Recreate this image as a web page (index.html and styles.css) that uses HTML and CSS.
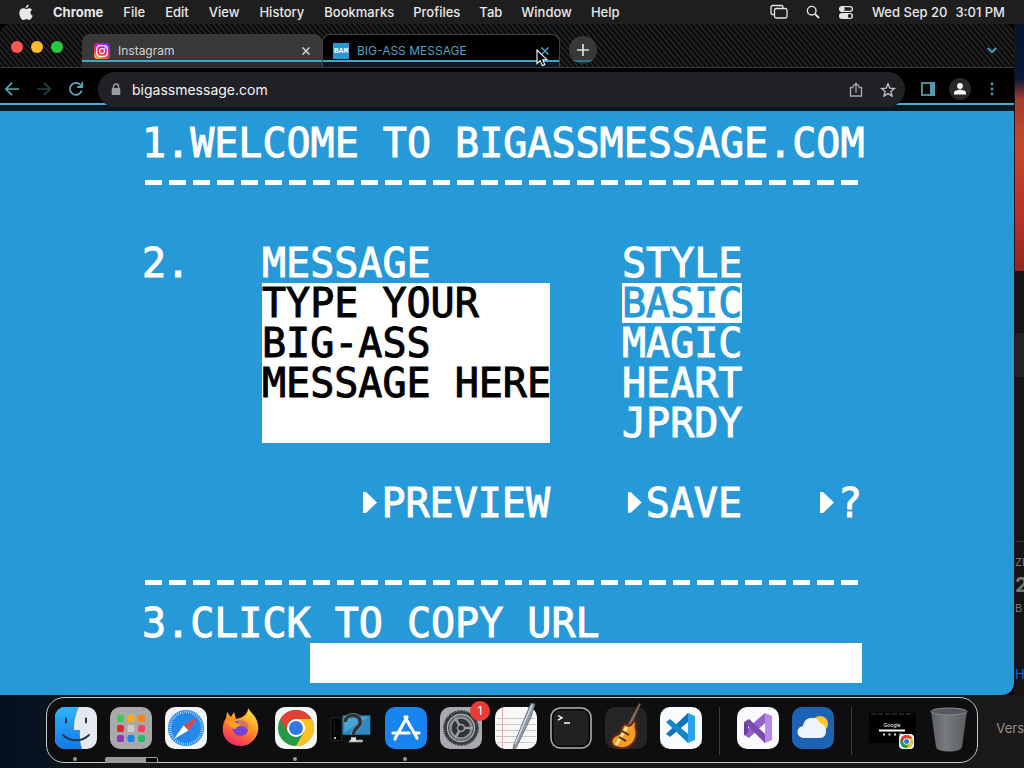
FILE: index.html
```html
<!DOCTYPE html>
<html lang="en">
<head>
<meta charset="utf-8">
<title>BIG-ASS MESSAGE</title>
<link rel="stylesheet" href="styles.css">
</head>
<body>
<header class="menubar">
  <nav class="menus" aria-label="Menu bar">
    <button class="menu apple" aria-label="Apple"><svg width="14" height="17" viewBox="0 0 14 17" fill="#e8e8e8"><path d="M9.7.4c.1 1.9-1.300 3.500-3 3.600C6.500 2.200 8 .6 9.700.4zM7.200 5c.8 0 1.600-.8 3-.8 1.300 0 2.300.7 2.900 1.600-2.500 1.600-2.100 4.900.6 6-.7 1.900-2 4.200-3.500 4.200-1.100 0-1.500-.7-2.800-.7s-1.800.7-2.800.7C2.500 16 .3 12.300.3 9.200c0-3.200 2-4.900 3.900-4.900C5.500 4.300 6.400 5 7.200 5z"/></svg></button>
    <button class="menu app">Chrome</button>
    <button class="menu">File</button>
    <button class="menu">Edit</button>
    <button class="menu">View</button>
    <button class="menu">History</button>
    <button class="menu">Bookmarks</button>
    <button class="menu">Profiles</button>
    <button class="menu">Tab</button>
    <button class="menu">Window</button>
    <button class="menu">Help</button>
  </nav>
  <div class="status">
    <button class="menu" aria-label="Windows"><svg width="18" height="16" viewBox="0 0 18 16" fill="none" stroke="#e4e4e4" stroke-width="1.300"><path d="M4 10.500H2.500A1.500 1.500 0 0 1 1 9V3a1.500 1.500 0 0 1 1.500-1.500h9A1.500 1.500 0 0 1 13 3v1"/><rect x="4.500" y="4.500" width="12.500" height="9.500" rx="1.800"/></svg></button>
    <button class="menu" aria-label="Search"><svg width="14" height="14" viewBox="0 0 14 14" fill="none" stroke="#e4e4e4" stroke-width="1.400"><circle cx="5.700" cy="5.700" r="4.300"/><path d="M9 9l4 4" stroke-width="1.800"/></svg></button>
    <button class="menu" aria-label="Control Center"><svg width="16" height="15" viewBox="0 0 16 15"><rect x="1.600" y="1.600" width="12.800" height="4.800" rx="2.400" fill="none" stroke="#e4e4e4" stroke-width="1.300"/><circle cx="4.300" cy="4" r="2.400" fill="#e4e4e4"/><rect x="1" y="8" width="14" height="6" rx="3" fill="#e4e4e4"/><circle cx="11.700" cy="11" r="1.900" fill="#1e1e1e"/></svg></button>
    <time class="clock"><span>Wed Sep 20</span><span>3:01 PM</span></time>
  </div>
</header>

<div class="workspace">
  <section class="window">
    <div class="tabstrip">
      <div class="lights">
        <button class="light red" aria-label="Close"></button>
        <button class="light yellow" aria-label="Minimize"></button>
        <button class="light green" aria-label="Zoom"></button>
      </div>
      <div class="tab">
        <svg width="16" height="16" viewBox="0 0 16 16"><defs><linearGradient id="ig" x1="0.200" y1="1" x2="0.700" y2="0"><stop offset="0" stop-color="#fdbf3a"/><stop offset=".35" stop-color="#f4373d"/><stop offset=".65" stop-color="#d020a0"/><stop offset="1" stop-color="#8a1fff"/></linearGradient></defs><rect width="16" height="16" rx="3.500" fill="url(#ig)"/><rect x="2.700" y="2.700" width="10.600" height="10.600" rx="3" fill="none" stroke="#fff" stroke-width="1.200"/><circle cx="8" cy="8" r="2.500" fill="none" stroke="#fff" stroke-width="1.200"/><circle cx="11" cy="5" r=".8" fill="#fff"/></svg>
        <a class="tab-title" href="#">Instagram</a>
        <button class="tab-close" aria-label="Close tab"><svg width="8" height="8" viewBox="0 0 8 8" stroke="currentColor" stroke-width="1.500"><path d="M.5.5l7 7M7.500.5l-7 7"/></svg></button>
      </div>
      <div class="tab active">
        <span class="favicon">BAM</span>
        <a class="tab-title" href="#">BIG-ASS MESSAGE</a>
        <button class="tab-close" aria-label="Close tab"><svg width="8" height="8" viewBox="0 0 8 8" stroke="currentColor" stroke-width="1.500"><path d="M.5.5l7 7M7.500.5l-7 7"/></svg></button>
        <svg class="pointer" width="12" height="18" viewBox="0 0 12 18"><path d="M1 1v13.500l3.200-2.900 2.100 5 2.500-1-2.100-4.900H11z" fill="#000" stroke="#fff" stroke-width="1.100"/></svg>
      </div>
      <button class="newtab" aria-label="New tab"><svg width="12" height="12" viewBox="0 0 12 12" stroke="#ddd" stroke-width="1.700"><path d="M6 0v12M0 6h12"/></svg></button>
      <button class="tabsearch" aria-label="Search tabs"><svg width="10" height="7" viewBox="0 0 10 7" fill="none" stroke="#4f9fae" stroke-width="1.800"><path d="M.8 1L5 5.200 9.200 1"/></svg></button>
    </div>
    <div class="toolbar">
      <div class="nav">
        <button class="tool" aria-label="Back"><svg width="16" height="16" viewBox="0 0 16 16" fill="none" stroke="#57a9b8" stroke-width="1.700"><path d="M15 8H2M8 1.800L1.800 8 8 14.200"/></svg></button>
        <button class="tool" aria-label="Forward"><svg width="16" height="16" viewBox="0 0 16 16" fill="none" stroke="#22434a" stroke-width="1.700"><path d="M1 8h13M8 1.800L14.200 8 8 14.200"/></svg></button>
        <button class="tool" aria-label="Reload"><svg width="16" height="16" viewBox="0 0 16 16" fill="none" stroke="#57a9b8" stroke-width="1.800"><path d="M13.700 9.500A6 6 0 1 1 12.500 4L14 5.500"/><path d="M14.200 1v5H9.200"/></svg></button>
      </div>
      <div class="omnibox">
        <svg width="10" height="13" viewBox="0 0 10 13"><path d="M2.500 6V3.500a2.500 2.500 0 0 1 5 0V6" fill="none" stroke="#9a9da1" stroke-width="1.400"/><rect x=".7" y="5" width="8.600" height="7" rx="1" fill="#9a9da1"/></svg>
        <input class="url" type="text" aria-label="Address" value="bigassmessage.com">
        <button class="tool" aria-label="Share"><svg width="14" height="16" viewBox="0 0 14 16" fill="none" stroke="#a9abad" stroke-width="1.300"><path d="M4.500 5.500h-3v8.500h11V5.500h-3M7 10.500V1.500M4 4.300l3-3 3 3"/></svg></button>
        <button class="tool" aria-label="Bookmark"><svg width="16" height="16" viewBox="0 0 16 16" fill="none" stroke="#b9bbbd" stroke-width="1.400"><path d="M8 1.800l1.800 4.300 4.600.4-3.500 3 1.100 4.500L8 11.600 4 14l1.100-4.500-3.500-3 4.600-.4z"/></svg></button>
      </div>
      <div class="actions">
        <button class="tool" aria-label="Side panel"><svg width="14" height="14" viewBox="0 0 14 14"><rect x="1" y="1" width="12" height="12" fill="none" stroke="#4f9dac" stroke-width="1.800"/><path d="M9 0h5v14H9z" fill="#4f9dac"/></svg></button>
        <button class="tool avatar" aria-label="Profile"><svg width="12" height="12" viewBox="0 0 12 12" fill="#fff"><circle cx="6" cy="3" r="2.900"/><path d="M0 11.500V10c0-2.200 3-3.300 6-3.300s6 1.100 6 3.300v1.500z"/></svg></button>
        <button class="tool" aria-label="More"><svg width="4" height="14" viewBox="0 0 4 14" fill="#4f9dac"><circle cx="2" cy="2" r="1.400"/><circle cx="2" cy="7" r="1.400"/><circle cx="2" cy="12" r="1.400"/></svg></button>
      </div>
    </div>

    <main class="page">
      <form class="sheet">
        <h1 class="line">1.WELCOME TO BIGASSMESSAGE.COM</h1>
        <hr class="dashes">
        <div class="composer">
          <span class="step">2.</span>
          <div class="message">
            <label class="line" for="msg">MESSAGE</label>
            <textarea class="field area" id="msg" rows="4" wrap="off">TYPE YOUR
BIG-ASS
MESSAGE HERE</textarea>
          </div>
          <div class="styles">
            <span class="line">STYLE</span>
            <button type="button" class="line option selected">BASIC</button>
            <button type="button" class="line option">MAGIC</button>
            <button type="button" class="line option">HEART</button>
            <button type="button" class="line option">JPRDY</button>
          </div>
          <button type="button" class="line command preview"><svg width="24" height="40" viewBox="0 0 24 40" fill="#fff"><path d="M6 9h3l11 10.500L9 30H6z"/></svg>PREVIEW</button>
          <button type="button" class="line command save"><svg width="24" height="40" viewBox="0 0 24 40" fill="#fff"><path d="M6 9h3l11 10.500L9 30H6z"/></svg>SAVE</button>
          <button type="button" class="line command help"><svg width="24" height="40" viewBox="0 0 24 40" fill="#fff"><path d="M6 9h3l11 10.500L9 30H6z"/></svg>?</button>
        </div>
        <hr class="dashes">
        <label class="line" for="link">3.CLICK TO COPY URL</label>
        <input class="field link" id="link" type="text" readonly>
      </form>
    </main>
  </section>

  <aside class="behind">
    <div class="wallpaper"></div>
    <div class="panel"></div>
    <div class="listing">
      <span class="caption">ZE</span>
      <span class="size">2</span>
      <span class="caption">B</span>
      <span class="more">H</span>
    </div>
  </aside>
</div>

<footer class="shelf">
  <nav class="dock" aria-label="Dock">
    <button class="icon running" aria-label="Finder"><svg width="42" height="42" viewBox="0 0 42 42"><defs><linearGradient id="fa" x2="0" y2="1"><stop stop-color="#2fb4f8"/><stop offset="1" stop-color="#1478e6"/></linearGradient></defs><rect width="42" height="42" rx="10" fill="#e4e9f1"/><path d="M10 0h14c-3 6-5 13-5 23h6c-.5 7 0 13 2 19H10A10 10 0 0 1 0 32V10A10 10 0 0 1 10 0z" fill="url(#fa)"/><path d="M11 11.500v4M31 11.500v4" stroke="#20364c" stroke-width="2" stroke-linecap="round"/><path d="M8 28c7 7 19 7 26 0" fill="none" stroke="#20364c" stroke-width="1.800" stroke-linecap="round"/></svg></button>
    <button class="icon loading" aria-label="Launchpad"><svg width="42" height="42" viewBox="0 0 42 42"><rect width="42" height="42" rx="10" fill="#a9a9a9"/><g><rect x="7" y="8" width="7" height="7" rx="2" fill="#3ccb4f"/><rect x="17.500" y="8" width="7" height="7" rx="2" fill="#fbae17"/><rect x="28" y="8" width="7" height="7" rx="2" fill="#f78414"/><rect x="7" y="18" width="7" height="7" rx="2" fill="#df262f"/><rect x="17.500" y="18" width="7" height="7" rx="2" fill="#ccc"/><rect x="28" y="18" width="7" height="7" rx="2" fill="#f7415b"/><rect x="7" y="28" width="7" height="7" rx="2" fill="#8d35bd"/><rect x="17.500" y="28" width="7" height="7" rx="2" fill="#1488e4"/><rect x="28" y="28" width="7" height="7" rx="2" fill="#25b96c"/></g></svg></button>
    <button class="icon" aria-label="Safari"><svg width="42" height="42" viewBox="0 0 42 42"><rect width="42" height="42" rx="10" fill="#f2f3f5"/><circle cx="21" cy="21" r="18" fill="#2388e8"/><circle cx="21" cy="21" r="16" fill="none" stroke="#d5eaff" stroke-width="2.500" stroke-dasharray=".7 1.394"/><path d="M33 10L18.500 18.500l5 5z" fill="#ee3e3e"/><path d="M9 32l9.500-13.500 5 5z" fill="#fff"/></svg></button>
    <button class="icon" aria-label="Firefox"><svg width="42" height="42" viewBox="0 0 42 42"><defs><linearGradient id="ff" x1=".8" y1="0" x2=".3" y2="1"><stop stop-color="#ffe843"/><stop offset=".5" stop-color="#ff8b21"/><stop offset="1" stop-color="#f5246c"/></linearGradient></defs><path d="M28 1c2 4 7 7 9 13 5 13-5 25-17 25C9 39 1 30 3 19c.5-4 2-6 3-8l1-6 4 5 3-5 2 7 4-1c5-2 8-5 8-10z" fill="url(#ff)"/><circle cx="20.500" cy="21" r="8" fill="#7542d5"/><path d="M7 14c3-1 6 1 10 2l4 1c-1 3-5 2-5 5-4 0-7-2-9-8z" fill="#ff9d25"/><path d="M17 13c5-2 12 0 14 6 1 4 0 7-2 9 0-6-4-9-9-9z" fill="#ff9a22" opacity=".6"/></svg></button>
    <button class="icon running" aria-label="Chrome"><svg width="42" height="42" viewBox="0 0 42 42"><rect width="42" height="42" rx="10" fill="#f4f4f4"/><g id="chrome-mark"><circle cx="21" cy="21" r="18" fill="#279847"/><path d="M21 12h15.600A18 18 0 0 1 21 39l7.800-13.500z" fill="#fcc41c"/><path d="M5.400 12A18 18 0 0 1 36.600 12H21l-7.800 13.500z" fill="#e34133"/><circle cx="21" cy="21" r="9" fill="#fff"/><circle cx="21" cy="21" r="7" fill="#3478e5"/></g></svg></button>
    <button class="icon" aria-label="Unknown device"><svg width="50" height="42" viewBox="0 0 50 42"><path d="M1 9h13v27H1zM5 13v16" fill="#040404" stroke="#2c2c2c"/><circle cx="6" cy="33" r="1.300" fill="#ddd"/><path d="M15 6h33v23H15z" fill="#2b8cc5"/><path d="M17 8h29L17 26z" fill="#48a4d3"/><path d="M24 35h15v3H22z" fill="#bbb"/><path d="M18 14c0-10 18-11 18 0 0 7-8 6-8 15" fill="none" stroke="#788794" stroke-width="6"/><path d="M18 14c0-10 18-11 18 0 0 7-8 6-8 15" fill="none" stroke="#28343e" stroke-width="4"/><path d="M25 32h6v5h-6z" fill="#ddd"/></svg></button>
    <button class="icon running" aria-label="App Store"><svg width="42" height="42" viewBox="0 0 42 42"><rect width="42" height="42" rx="10" fill="#1984ef"/><path d="M22 10L12 28M20 10l12 21M8 26h16M29 26h5M11 30l-1 2" stroke="#fff" stroke-width="3.200" stroke-linecap="round"/></svg></button>
    <button class="icon" aria-label="System Preferences"><svg width="42" height="42" viewBox="0 0 42 42"><rect width="42" height="42" rx="10" fill="#a7abaf"/><circle cx="21" cy="21" r="17" fill="#3a3c40"/><circle cx="21" cy="21" r="17" fill="none" stroke="#3a3c40" stroke-width="2" stroke-dasharray="1.200 1.025"/><circle cx="21" cy="21" r="13.500" fill="#4b4d50" stroke="#aeb1b4" stroke-width="1.300"/><circle cx="21" cy="21" r="10.500" fill="#303236" stroke="#8b8e92" stroke-width="2.500"/><path d="M21 21h12M21 21l-6-10.400M21 21l-6 10.400" stroke="#9b9ea2" stroke-width="2.500"/><circle cx="21" cy="21" r="3.500" fill="#303236" stroke="#9b9ea2" stroke-width="1.500"/></svg><span class="badge">1</span></button>
    <button class="icon" aria-label="TextEdit"><svg width="42" height="46" viewBox="0 -4 42 46"><rect width="42" height="42" rx="10" fill="#f8f8f8"/><path d="M2 11.500h38M1 17.500h40M1 23.500h40M1 29.500h40M2 35.500h38" stroke="#c7c7c7"/><path d="M7.500 1v40" stroke="#e7a9a9"/><path d="M36-4l4 1-4 13-15 31-3 1 1-5z" fill="#9199a5" stroke="#59616d" stroke-width=".8"/><path d="M37-2L20 37" stroke="#dce1e8" stroke-width="1.200"/></svg></button>
    <button class="icon" aria-label="Terminal"><svg width="42" height="42" viewBox="0 0 42 42"><rect x="1" y="1" width="40" height="40" rx="9.500" fill="#050505" stroke="#b5b5b5" stroke-width="1.500"/><rect x="3.500" y="3.500" width="35" height="35" rx="7" fill="#202122"/><path d="M8 8.500l4 2.300-4 2.300M14 16h6" fill="none" stroke="#fff" stroke-width="1.400"/></svg></button>
    <button class="icon" aria-label="GarageBand"><svg width="42" height="46" viewBox="0 -4 42 46"><rect width="42" height="42" rx="10" fill="#252525"/><path d="M34-4l2 1L25 22l-4-2z" fill="#81695b" stroke="#211713" stroke-width=".6"/><path d="M20 17c4 3 6 2 9-3l2 2c-2 4 2 8 0 14-2 10-13 13-20 10-7-3-5-10 1-12 6-2 3-8 8-11z" fill="#f29b28" stroke="#6b2515" stroke-width="2"/><path d="M22 20L11 38" stroke="#ffe18a" stroke-width="3"/><path d="M17 24l7 4M14 30l7 4" stroke="#4c2314" stroke-width="2"/></svg></button>
    <button class="icon" aria-label="Visual Studio Code"><svg width="42" height="42" viewBox="0 0 42 42"><rect width="42" height="42" rx="10" fill="#fafcff"/><path d="M28 6l7 3v24l-7 3z" fill="#29a3ee"/><path d="M28 6v9L10 30l-4-3z" fill="#1372b8"/><path d="M6 15l4-3 18 15v9z" fill="#1584cd"/></svg></button>
    <span class="divider"></span>
    <button class="icon" aria-label="Visual Studio"><svg width="42" height="42" viewBox="0 0 42 42"><rect width="42" height="42" rx="10" fill="#fafafe"/><path d="M28 6l7 3v24l-7 3z" fill="#b58be5"/><path d="M28 6v10L12 31l-5-3V25L21 12z" fill="#9660cf"/><path d="M7 15l5-3 16 15v9z" fill="#7949ad"/><path d="M7 15l4 3v8l-4 2z" fill="#68409a"/></svg></button>
    <button class="icon" aria-label="Weather"><svg width="42" height="42" viewBox="0 0 42 42"><rect width="42" height="42" rx="10" fill="#1c63b5"/><circle cx="28" cy="17" r="8" fill="#ffc62c"/><path d="M12 31a6 6 0 0 1-1-12c1-10 14-11 17-3 8 2 8 15 0 15z" fill="#edf4ff"/></svg></button>
    <span class="divider"></span>
    <button class="icon" aria-label="Minimized Chrome window"><svg width="47" height="42" viewBox="0 0 47 42"><path d="M0 5h47v31H0z" fill="#010101"/><path d="M2 7h43" stroke="#444" stroke-width="1" stroke-dasharray="5 2"/><text x="23" y="20" text-anchor="middle" class="tiny">Google</text><path d="M10 23.500h26" stroke="#fff" stroke-width="2"/><path d="M14 27.500h19" stroke="#ddd" stroke-width="2" stroke-dasharray="2 3.500"/><rect x="30" y="27" width="15" height="15" rx="4" fill="#f4f4f4"/><g transform="translate(30 27) scale(.36)"><use href="#chrome-mark"/></g></svg></button>
    <button class="icon" aria-label="Trash"><svg width="40" height="46" viewBox="0 0 40 46"><defs><linearGradient id="tr"><stop stop-color="#5c6064"/><stop offset=".4" stop-color="#777b7f"/><stop offset="1" stop-color="#595d61"/></linearGradient></defs><path d="M2 4l5 36c1 6 25 6 26 0l5-36z" fill="url(#tr)"/><ellipse cx="20" cy="4.500" rx="18" ry="3.500" fill="#55595d" stroke="#858a8e"/></svg></button>
  </nav>
  <span class="version">Vers</span>
</footer>
</body>
</html>
```
FILE: styles.css
```css
* { box-sizing: border-box; }

body {
  margin: 0;
  min-height: 100vh;
  display: flex;
  flex-direction: column;
  background: linear-gradient(90deg, #03101f 0, #071321 40px, #171415 100px, #1c1919 100%);
  font-family: Inter, "Liberation Sans", sans-serif;
  font-size: 13px;
  color: #e8e8e8;
  overflow: hidden;
}

button {
  margin: 0;
  padding: 0;
  border: 0;
  background: none;
  color: inherit;
  font: inherit;
}

svg { display: block; }

/* Menu bar */
.menubar {
  height: 24px;
  display: flex;
  align-items: center;
  justify-content: space-between;
  padding: 0 19px;
  background: #1e1e1e;
  white-space: nowrap;
}
.menus { display: flex; align-items: center; gap: 20px; }
.menu { font-weight: 500; line-height: 24px; }
.menus .menu:nth-child(n+8) { margin-left: -1px; }
.app { font-weight: 700; }
.status { display: flex; align-items: center; gap: 18px; }
.clock { display: flex; gap: 8px; font-weight: 500; }

/* Browser window */
.workspace { flex: 1; display: flex; background: #000; }
.window {
  flex: 1;
  min-width: 0;
  display: flex;
  flex-direction: column;
  border-radius: 10px 10px 12px 0;
  overflow: hidden;
}
.tabstrip {
  height: 44px;
  display: flex;
  align-items: flex-end;
  padding: 0 17px 0 11px;
  border-bottom: 1px solid #3a3a3a;
  background: repeating-linear-gradient(50deg, #0c0c0c 0, #0c0c0c 2px, #303030 3px, #0c0c0c 4px);
}
.lights { display: flex; gap: 8px; width: 71px; padding-bottom: 14px; }
.light { width: 12px; height: 12px; border-radius: 50%; }
.red { background: #fc5753; }
.yellow { background: #fdbc2e; }
.green { background: #28c840; }
.tab {
  position: relative;
  width: 240px;
  height: 33px;
  display: flex;
  align-items: center;
  gap: 8px;
  padding: 0 12px;
  border-radius: 8px 8px 0 0;
  background: linear-gradient(#393939 26px, #3fa6c8 26px, #3fa6c8 28px, #2c2c2c 28px);
  color: #d2d2d2;
}
.tab.active {
  width: 238px;
  background: linear-gradient(#000 25px, #3fa6c8 25px, #3fa6c8 27px, #10191f 27px);
  border: 1px solid #444;
  border-bottom: 0;
  color: #4aa3c0;
  padding: 0 10px;
}
.tab-title { flex: 1; color: inherit; font-size: 12px; line-height: 16px; text-decoration: none; }
.favicon {
  width: 16px;
  height: 16px;
  background: #2699d9;
  color: #fff;
  font: bold 8px/16px "Liberation Mono", monospace;
  text-align: center;
}
.pointer { position: absolute; left: 213px; top: 14px; }
.newtab {
  width: 28px;
  height: 28px;
  margin: 0 auto 3px 9px;
  display: grid;
  place-items: center;
  border-radius: 50%;
  background: linear-gradient(#383838 24px, #2b7087 24px, #2b7087 26px, #303030 26px);
}
.tabsearch { padding-bottom: 13px; }

.toolbar {
  height: 43px;
  display: flex;
  align-items: flex-start;
  padding-top: 4px;
  background: linear-gradient(#000 35px, #55a9c6 35px, #55a9c6 37px, #071821 37px);
}
.nav { width: 98px; height: 34px; display: flex; align-items: center; gap: 16px; padding-left: 4px; }
.omnibox {
  flex: 1;
  height: 35px;
  display: flex;
  align-items: center;
  gap: 11px;
  padding: 0 9px 0 13px;
  border-radius: 17px;
  background: #202124;
}
.url {
  flex: 1;
  min-width: 0;
  padding: 0;
  border: 0;
  outline: 0;
  background: none;
  color: #f4f4f4;
  font: 14px/20px Inter, "Liberation Sans", sans-serif;
}
.omnibox .tool + .tool { margin-left: 6px; }
.actions { height: 34px; display: flex; align-items: center; gap: 14px; padding: 0 20px 0 16px; }
.avatar { width: 22px; height: 22px; display: grid; place-items: center; border-radius: 50%; background: #282828; }
.actions .tool:last-child { margin-left: 5px; }

/* Message page */
.page {
  flex: 1;
  padding: 12px 10px 12px 0;
  background: #2699d9;
  color: #fff;
}
.sheet {
  max-width: 720px;
  margin: 0 auto;
  display: flex;
  flex-direction: column;
  font: 40px/40px "DejaVu Sans Mono", monospace;
}
.sheet, .field { -webkit-text-stroke: 1px; }
.line { display: block; margin: 0; font: inherit; line-height: 40px; white-space: nowrap; text-align: left; }
.dashes {
  width: 100%;
  height: 5px;
  margin: 17px 0 18px;
  border: 0;
  background: repeating-linear-gradient(90deg, transparent 0, transparent 3px, #fff 3px, #fff 20px, transparent 20px, transparent 24px);
}
.composer {
  display: grid;
  grid-template-columns: 120px 288px 72px 120px 1fr;
  row-gap: 40px;
  margin: 40px 0;
}
.styles { grid-column: 4; }
.field {
  display: block;
  margin: 0;
  padding: 0;
  border: 0;
  border-radius: 0;
  outline: 0;
  background: #fff;
  color: #000;
  font: 40px/40px "DejaVu Sans Mono", monospace;
}
.area { width: 100%; height: 160px; resize: none; overflow: hidden; }
.selected { background: #fff; color: #2699d9; }
.command { display: flex; }
.preview { grid-column: 2; justify-self: end; }
.save { grid-column: 4; }
.help { grid-column: 5; justify-self: end; }
.link { height: 40px; margin-left: 168px; }

/* Windows showing past the right edge */
.behind {
  width: 10px;
  display: flex;
  flex-direction: column;
  padding-left: 1px;
  overflow: hidden;
  background: #161414;
}
.wallpaper { height: 247px; background: linear-gradient(#03152e 0, #0b1738 55px, #a33b32 75px, #c6482c 120px, #b52e29 200px, #8f2820 247px); }
.panel { height: 44px; margin-top: 62px; background: #242222; }
.listing {
  flex: 1;
  display: flex;
  flex-direction: column;
  margin-top: 164px;
  padding-top: 12px;
  border-top: 1px solid #333;
  color: #777;
}
.caption { font-size: 11px; line-height: 16px; }
.size { font-size: 20px; line-height: 30px; font-weight: 700; }
.more { margin-top: 50px; color: #1768c4; line-height: 16px; }

/* Dock */
.shelf {
  position: relative;
  height: 73px;
  display: flex;
  justify-content: center;
  align-items: flex-start;
  padding-top: 2px;
}
.dock {
  height: 66px;
  display: flex;
  gap: 13px;
  padding: 9px 8px 0;
  border: 1px solid #c8c8c8;
  border-radius: 18px;
  background: #0e0e0f;
}
.icon { position: relative; height: 42px; display: flex; align-items: flex-end; }
.icon[aria-label="Unknown device"] { width: 42px; justify-content: center; }
.icon[aria-label="Trash"] { align-items: flex-start; }
.running::after {
  content: "";
  position: absolute;
  left: 18px;
  top: 50px;
  width: 4px;
  height: 4px;
  border-radius: 50%;
  background: #999;
}
.loading::after {
  content: "";
  position: absolute;
  left: -5px;
  top: 50px;
  width: 51px;
  height: 4px;
  border: 1px solid #999;
  border-radius: 2px;
  background: linear-gradient(90deg, #999 40px, #000 40px);
}
.badge {
  position: absolute;
  right: -8px;
  top: -6px;
  width: 20px;
  height: 20px;
  border-radius: 50%;
  background: #ec3a35;
  color: #fff;
  font-size: 12px;
  line-height: 20px;
  text-align: center;
}
.divider { width: 1px; height: 48px; margin: 0 4px; background: #3c3c3c; }
.tiny { fill: #fff; font: 5px Inter, sans-serif; }
.version { position: absolute; right: 0; top: 25px; color: #929292; line-height: 16px; }
```
